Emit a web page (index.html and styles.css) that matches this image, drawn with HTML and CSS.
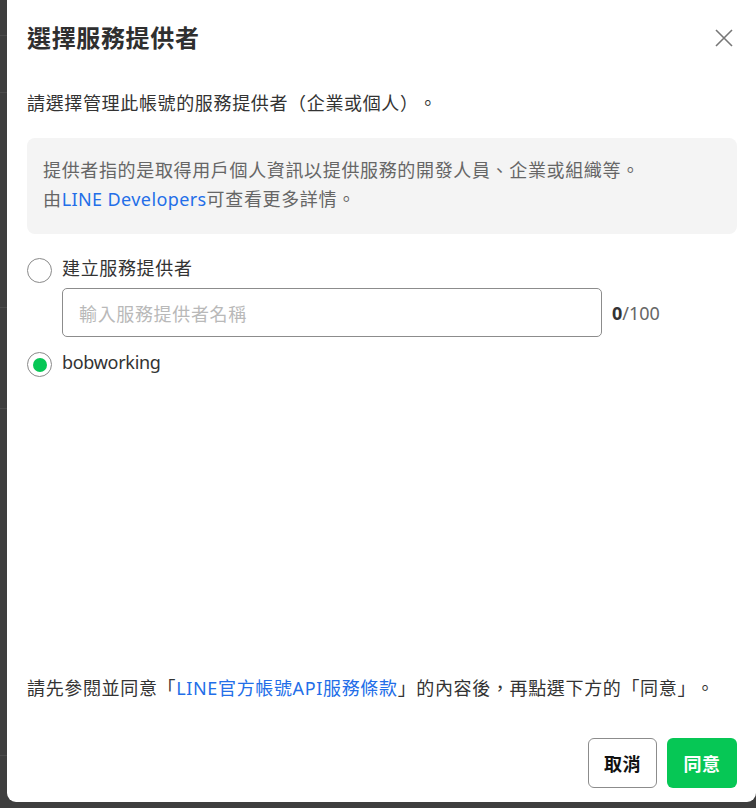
FILE: index.html
```html
<!DOCTYPE html>
<html lang="zh-Hant">
<head>
<meta charset="utf-8">
<title>選擇服務提供者</title>
<link rel="stylesheet" href="styles.css">
</head>
<body>
<div class="page">
  <div class="page-row r1"></div>
  <div class="page-row r2"></div>
  <div class="page-row r3"></div>
  <div class="page-row r4"></div>
  <div class="page-row r5"></div>
</div>

<div class="overlay">
  <div class="modal">
    <div class="modal-header">
      <h1 class="modal-title">選擇服務提供者</h1>
      <button class="close" aria-label="關閉">
        <svg width="18" height="18" viewBox="0 0 18 18"><path d="M1 1 L17 17 M17 1 L1 17" stroke="#777" stroke-width="1.6" fill="none"/></svg>
      </button>
    </div>

    <p class="desc">請選擇管理此帳號的服務提供者（企業或個人）。</p>

    <div class="note">
      <p>提供者指的是取得用戶個人資訊以提供服務的開發人員、企業或組織等。</p>
      <p>由<a class="link" href="#">LINE Developers</a>可查看更多詳情。</p>
    </div>

    <label class="option opt-new">
      <span class="radio"></span>
      <span class="opt-label">建立服務提供者</span>
    </label>
    <div class="input-row">
      <div class="input">輸入服務提供者名稱</div>
      <span class="counter"><b>0</b>/100</span>
    </div>

    <label class="option opt-existing">
      <span class="radio checked"></span>
      <span class="opt-label latin">bobworking</span>
    </label>

    <p class="terms">請先參閱並同意「<a class="link" href="#">LINE官方帳號API服務條款</a>」的內容後，再點選下方的「同意」。</p>

    <div class="actions">
      <button class="btn btn-cancel">取消</button>
      <button class="btn btn-ok">同意</button>
    </div>
  </div>
</div>
</body>
</html>
```

FILE: styles.css
```css
* { box-sizing: border-box; }

html, body {
  margin: 0;
  padding: 0;
  width: 756px;
  height: 808px;
  overflow: hidden;
}

body {
  background: #3e3e3e;
  font-family: "Noto Sans", "Noto Sans CJK TC", sans-serif;
  color: #333;
  text-spacing-trim: space-all;
}

/* dimmed page behind the dialog */
.page {
  display: flex;
  flex-direction: column;
}
.page-row {
  border-bottom: 1px solid #4c4c4c;
}
.r1 { height: 36px; }
.r2 { height: 57px; }
.r3 { height: 215px; }
.r4 { height: 101px; }
.r5 { height: 347px; }

.overlay {
  position: fixed;
  inset: 0;
}

.modal {
  position: absolute;
  left: 7px;
  top: 0;
  width: 749px;
  height: 802px;
  background: #fff;
  border-radius: 0 0 9px 9px;
  padding: 0 19px 14px 20px;
  display: flex;
  flex-direction: column;
  letter-spacing: 0.65px;
}

.modal-header {
  height: 76px;
  display: flex;
  align-items: center;
  justify-content: space-between;
}
.modal-title {
  margin: 0;
  font-size: 24px;
  font-weight: 700;
  color: #2f2f2f;
  line-height: 30px;
}
.close {
  border: 0;
  background: none;
  padding: 0;
  margin-right: 4px;
  width: 18px;
  height: 18px;
  display: flex;
}

.desc {
  margin: 14px 0 21px;
  font-size: 18px;
  line-height: 27px;
}

.note {
  background: #f4f4f4;
  border-radius: 8px;
  padding: 18px 16px 20px;
  color: #666;
  font-size: 18px;
  line-height: 29px;
}
.note p { margin: 0; }
.note .link { letter-spacing: 0.4px; }

.link {
  color: #236ee8;
  text-decoration: none;
}

.option {
  display: flex;
  align-items: center;
  gap: 10px;
  height: 27px;
  font-size: 18px;
  line-height: 27px;
}
.opt-new { margin-top: 23px; }
.opt-existing { margin-top: 14px; }

.radio {
  width: 25px;
  height: 25px;
  border: 1.2px solid #8a8a8a;
  border-radius: 50%;
  display: flex;
  align-items: center;
  justify-content: center;
  flex: none;
}
.radio.checked::after {
  content: "";
  width: 14px;
  height: 14px;
  border-radius: 50%;
  background: #06c755;
}
.opt-label { position: relative; top: -2px; }
.opt-label.latin { letter-spacing: -0.3px; }

.input-row {
  margin: 4px 0 0 35px;
  display: flex;
  align-items: center;
  gap: 10px;
}
.input {
  width: 540px;
  height: 49px;
  border: 1px solid #8c8c8c;
  border-radius: 5px;
  padding: 0 16px;
  display: flex;
  align-items: center;
  color: #b9b9b9;
  font-size: 18px;
}
.counter {
  font-size: 18px;
  color: #666;
  letter-spacing: 0;
}
.counter b { color: #333; }

.terms {
  margin: auto 0 0;
  font-size: 18px;
  line-height: 27px;
}

.actions {
  margin-top: 36px;
  display: flex;
  justify-content: flex-end;
  gap: 10px;
}
.btn {
  height: 50px;
  width: 69px;
  border-radius: 6px;
  font-family: inherit;
  font-size: 18px;
  font-weight: 700;
  letter-spacing: 0.5px;
  padding: 0;
  cursor: pointer;
}
.btn-cancel {
  background: #fff;
  border: 1px solid #8c8c8c;
  color: #111;
}
.btn-ok {
  width: 70px;
  background: #06c755;
  border: 0;
  color: #fff;
}
```
